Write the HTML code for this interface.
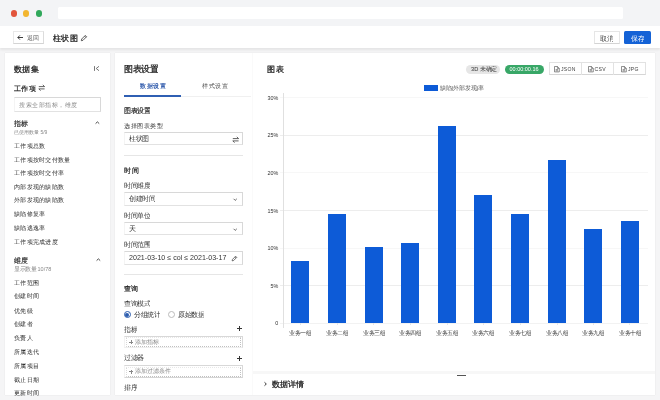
<!DOCTYPE html>
<html><head><meta charset="utf-8">
<style>
*{margin:0;padding:0;box-sizing:border-box}
html,body{width:660px;height:400px;overflow:hidden}
body{background:#f5f5f6;font-family:"Liberation Sans",sans-serif;color:#222;position:relative;-webkit-font-smoothing:antialiased}
.a{position:absolute}
.t{position:absolute;white-space:nowrap;line-height:1;transform:scale(.25);transform-origin:0 0}
.dot{position:absolute;width:6.2px;height:6.2px;border-radius:50%;top:10.4px}
.panel{position:absolute;background:#fff;box-shadow:0 0 1px rgba(0,0,0,.12)}
.box{position:absolute;border:1px solid #d8d8d8;border-bottom-color:#e2e2e2;border-left-color:#f4f4f4;background:#fff}
.grid{position:absolute;left:279.5px;width:368px;height:1px;background:#f1f1f1}
.bar{position:absolute;width:18px;background:#0d5bd7}
svg{position:absolute;overflow:visible}
#w{position:absolute;left:0;top:0;width:660px;height:400px;will-change:transform}
.m{-webkit-text-stroke:1px currentColor}
.n{transform:none}
</style></head><body><div id="w">
<div class="a" style="left:0;top:0;width:660px;height:26px;background:#f3f4f6"></div>
<div class="dot" style="left:10.7px;background:#e2553c"></div>
<div class="dot" style="left:23.1px;background:#f2b630"></div>
<div class="dot" style="left:36.2px;background:#30a85b"></div>
<div class="a" style="left:57.5px;top:7px;width:565px;height:12.4px;background:#fff;border-radius:1.5px"></div>
<div class="a" style="left:0;top:26px;width:660px;height:22px;background:#fff;box-shadow:0 1.5px 2.5px rgba(0,0,0,.07)"></div>
<div class="a" style="left:12.5px;top:30.7px;width:31px;height:13.7px;border:1px solid #e8e8e8;border-bottom-color:#d4d4d4;border-right-color:#dcdcdc;background:#fff"></div>
<svg style="left:17.2px;top:35.2px" width="6" height="5" viewBox="0 0 6 5"><path d="M6 2.5 H0.9 M2.9 0.4 L0.8 2.5 L2.9 4.6" fill="none" stroke="#333" stroke-width=".95"/></svg>
<div class="t" style="left:26.6px;top:34.94px;font-size:25.20px;color:#555;">返回</div>
<div class="t m" style="left:52.9px;top:34.10px;font-size:33.20px;color:#222;-webkit-text-stroke-width:1px;">柱状图</div>
<svg style="left:79.5px;top:34px" width="8" height="8" viewBox="0 0 8 8"><path d="M1.3 6.7 L1.7 5 L5.3 1.4 L6.6 2.7 L3 6.3 Z M4.6 2.1 L5.9 3.4" fill="none" stroke="#444" stroke-width=".85" stroke-linejoin="round"/></svg>
<div class="a" style="left:594.3px;top:31px;width:25.5px;height:13.2px;border:1px solid #e6e6e6;border-bottom-color:#d4d4d4;background:#fff"></div>
<div class="t" style="left:600.4px;top:35.05px;font-size:26.00px;color:#333;">取消</div>
<div class="a" style="left:624.2px;top:31.2px;width:26.5px;height:12.8px;background:#1462d6;border-radius:1.5px"></div>
<div class="t" style="left:630.9px;top:35.00px;font-size:26.40px;color:#fff;">保存</div>
<div class="panel" style="left:4.5px;top:53px;width:105.5px;height:342px"></div>
<div class="t m" style="left:14px;top:65.35px;font-size:32.80px;color:#222;-webkit-text-stroke-width:1px;">数据集</div>
<svg style="left:94px;top:66.1px" width="6" height="5" viewBox="0 0 6 5"><path d="M0.5 0.1 V4.9 M5 0.3 L2.2 2.5 L5 4.7" fill="none" stroke="#555" stroke-width=".8"/></svg>
<div class="t m" style="left:14px;top:84.57px;font-size:29.20px;color:#222;-webkit-text-stroke-width:0.8px;">工作项</div>
<svg style="left:37.6px;top:84.4px" width="7" height="7" viewBox="0 0 7 7"><path d="M0.8 2.6 H6.6 L4.8 0.9 M6.6 4.9 H0.8 L2.6 6.6" fill="none" stroke="#444" stroke-width=".85"/></svg>
<div class="box" style="left:14px;top:97.4px;width:87px;height:14.2px"></div>
<div class="t" style="left:19px;top:101.79px;font-size:25.60px;color:#8a8a8a;">搜索全部指标，维度</div>
<div class="t m" style="left:14px;top:119.80px;font-size:27.20px;color:#222;-webkit-text-stroke-width:0.6px;">指标</div>
<svg style="left:95px;top:121px" width="5" height="3" viewBox="0 0 5 3"><path d="M0.6 2.6 L2.4 0.9 L4.2 2.6" fill="none" stroke="#333" stroke-width=".9"/></svg>
<div class="t" style="left:14px;top:130.05px;font-size:20.00px;color:#888;">已使用数量 5/9</div>
<div class="t" style="left:14px;top:143.04px;font-size:25.20px;color:#2a2a2a;">工作项总数</div>
<div class="t" style="left:14px;top:156.54px;font-size:25.20px;color:#2a2a2a;">工作项按时交付数量</div>
<div class="t" style="left:14px;top:170.04px;font-size:25.20px;color:#2a2a2a;">工作项按时交付率</div>
<div class="t" style="left:14px;top:183.64px;font-size:25.20px;color:#2a2a2a;">内部发现的缺陷数</div>
<div class="t" style="left:14px;top:197.34px;font-size:25.20px;color:#2a2a2a;">外部发现的缺陷数</div>
<div class="t" style="left:14px;top:211.04px;font-size:25.20px;color:#2a2a2a;">缺陷修复率</div>
<div class="t" style="left:14px;top:225.04px;font-size:25.20px;color:#2a2a2a;">缺陷逃逸率</div>
<div class="t" style="left:14px;top:238.79px;font-size:25.20px;color:#2a2a2a;">工作项完成进度</div>
<div class="t m" style="left:14px;top:256.80px;font-size:27.20px;color:#222;-webkit-text-stroke-width:0.6px;">维度</div>
<svg style="left:95.5px;top:258.3px" width="5" height="3" viewBox="0 0 5 3"><path d="M0.6 2.6 L2.4 0.9 L4.2 2.6" fill="none" stroke="#333" stroke-width=".9"/></svg>
<div class="t" style="left:14px;top:266.17px;font-size:22.00px;color:#888;">显示数量 10/78</div>
<div class="t" style="left:14px;top:279.54px;font-size:25.20px;color:#2a2a2a;">工作范围</div>
<div class="t" style="left:14px;top:293.04px;font-size:25.20px;color:#2a2a2a;">创建时间</div>
<div class="t" style="left:14px;top:307.79px;font-size:25.20px;color:#2a2a2a;">优先级</div>
<div class="t" style="left:14px;top:321.04px;font-size:25.20px;color:#2a2a2a;">创建者</div>
<div class="t" style="left:14px;top:335.04px;font-size:25.20px;color:#2a2a2a;">负责人</div>
<div class="t" style="left:14px;top:349.04px;font-size:25.20px;color:#2a2a2a;">所属迭代</div>
<div class="t" style="left:14px;top:362.79px;font-size:25.20px;color:#2a2a2a;">所属项目</div>
<div class="t" style="left:14px;top:376.54px;font-size:25.20px;color:#2a2a2a;">截止日期</div>
<div class="t" style="left:14px;top:390.04px;font-size:25.20px;color:#2a2a2a;">更新时间</div>
<div class="panel" style="left:114.5px;top:53px;width:138px;height:342px"></div>
<div class="t m" style="left:124px;top:65.46px;font-size:34.40px;color:#222;-webkit-text-stroke-width:1px;">图表设置</div>
<div class="t m" style="left:139.8px;top:82.79px;font-size:25.60px;color:#214fa6;-webkit-text-stroke-width:0.6px;">数据设置</div>
<div class="t" style="left:201.8px;top:82.79px;font-size:25.60px;color:#555;">样式设置</div>
<div class="a" style="left:124px;top:96px;width:127px;height:1px;background:#f0f0f0"></div>
<div class="a" style="left:124px;top:95px;width:57px;height:2px;background:#2f5fb3"></div>
<div class="t m" style="left:124px;top:107.30px;font-size:26.40px;color:#222;-webkit-text-stroke-width:0.6px;">图表设置</div>
<div class="t" style="left:124px;top:122.79px;font-size:25.60px;color:#333;">选择图表类型</div>
<div class="box" style="left:124px;top:132px;width:118.5px;height:13.4px"></div>
<div class="t" style="left:128.5px;top:135.25px;font-size:26.00px;color:#333;">柱状图</div>
<svg style="left:231.5px;top:135.8px" width="7" height="7" viewBox="0 0 7 7"><path d="M0.8 2.6 H6.6 L4.8 0.9 M6.6 4.9 H0.8 L2.6 6.6" fill="none" stroke="#444" stroke-width=".85"/></svg>
<div class="a" style="left:124px;top:155px;width:119px;height:1px;background:#e6e6e6"></div>
<div class="t m" style="left:124px;top:167.22px;font-size:29.60px;color:#222;-webkit-text-stroke-width:0.8px;">时间</div>
<div class="t" style="left:124px;top:182.14px;font-size:26.00px;color:#333;">时间维度</div>
<div class="box" style="left:124px;top:192px;width:118.6px;height:13.5px"></div>
<div class="t" style="left:128.8px;top:195.44px;font-size:26.00px;color:#333;">创建时间</div>
<svg style="left:232.6px;top:197.5px" width="5" height="3" viewBox="0 0 5 3"><path d="M0.6 0.8 L2.2 2.4 L3.8 0.8" fill="none" stroke="#444" stroke-width=".8"/></svg>
<div class="t" style="left:124px;top:211.64px;font-size:26.00px;color:#333;">时间单位</div>
<div class="box" style="left:124px;top:222px;width:118.6px;height:13.3px"></div>
<div class="t" style="left:128.8px;top:224.75px;font-size:26.00px;color:#333;">天</div>
<svg style="left:232.6px;top:227.5px" width="5" height="3" viewBox="0 0 5 3"><path d="M0.6 0.8 L2.2 2.4 L3.8 0.8" fill="none" stroke="#444" stroke-width=".8"/></svg>
<div class="t" style="left:124px;top:241.14px;font-size:26.00px;color:#333;">时间范围</div>
<div class="box" style="left:124px;top:251.4px;width:118.6px;height:13.3px"></div>
<div class="t" style="left:128.6px;top:254.46px;font-size:28.40px;color:#333;">2021-03-10 ≤ col ≤ 2021-03-17</div>
<svg style="left:231.3px;top:254.6px" width="7" height="7" viewBox="0 0 8 8"><path d="M1.3 6.7 L1.7 5 L5.3 1.4 L6.6 2.7 L3 6.3 Z M4.6 2.1 L5.9 3.4" fill="none" stroke="#444" stroke-width=".85" stroke-linejoin="round"/></svg>
<div class="a" style="left:124px;top:274px;width:119px;height:1px;background:#e6e6e6"></div>
<div class="t m" style="left:124px;top:285.32px;font-size:28.80px;color:#222;-webkit-text-stroke-width:0.8px;">查询</div>
<div class="t" style="left:124px;top:299.94px;font-size:26.00px;color:#333;">查询模式</div>
<div class="a" style="left:123.65px;top:311.25px;width:7.2px;height:7.2px;border-radius:50%;border:.9px solid #2b5cae;background:#fff"></div>
<div class="a" style="left:125.25px;top:312.85px;width:4px;height:4px;border-radius:50%;background:#2b5cae"></div>
<div class="t" style="left:133.7px;top:311.44px;font-size:26.00px;color:#333;">分组统计</div>
<div class="a" style="left:168.1px;top:311.3px;width:7.2px;height:7.2px;border-radius:50%;border:.8px solid #bbb;background:#fff"></div>
<div class="t" style="left:177.8px;top:311.44px;font-size:26.00px;color:#333;">原始数据</div>
<div class="t" style="left:124px;top:325.55px;font-size:26.00px;color:#333;">指标</div>
<div class="a" style="left:236.5px;top:328.1px;width:5.6px;height:.9px;background:#333"></div><div class="a" style="left:238.85px;top:325.8px;width:.9px;height:5.6px;background:#333"></div>
<div class="a" style="left:124px;top:335.5px;width:118.5px;height:12.6px;border:1px solid #d8d8d8;border-bottom-color:#eee;border-left-color:#f2f2f2"></div>
<div class="a" style="left:126.3px;top:337.2px;width:114.5px;height:9.8px;border:.8px dotted #c0c0c0;border-top-color:#e8e8e8;border-left-color:#d8d8d8"></div>
<div class="a" style="left:129.0px;top:342.1px;width:4.2px;height:.6px;background:#888"></div><div class="a" style="left:130.8px;top:340.3px;width:.6px;height:4.2px;background:#888"></div>
<div class="t" style="left:135.4px;top:339.18px;font-size:24.00px;color:#888;">添加指标</div>
<div class="t" style="left:124px;top:354.44px;font-size:26.00px;color:#333;">过滤器</div>
<div class="a" style="left:236.5px;top:358.1px;width:5.6px;height:.9px;background:#333"></div><div class="a" style="left:238.85px;top:355.8px;width:.9px;height:5.6px;background:#333"></div>
<div class="a" style="left:124px;top:365.2px;width:118.5px;height:13.2px;border:1px solid #d8d8d8;border-bottom-color:#d4d4d4;border-left-color:#f2f2f2"></div>
<div class="a" style="left:126.3px;top:366.9px;width:114.5px;height:9.8px;border:.8px dotted #c0c0c0;border-top-color:#e8e8e8;border-left-color:#d8d8d8"></div>
<div class="a" style="left:129.0px;top:371.4px;width:4.2px;height:.6px;background:#888"></div><div class="a" style="left:130.8px;top:369.6px;width:.6px;height:4.2px;background:#888"></div>
<div class="t" style="left:135.4px;top:368.38px;font-size:24.00px;color:#888;">添加过滤条件</div>
<div class="t" style="left:124px;top:384.14px;font-size:26.00px;color:#333;">排序</div>
<div class="panel" style="left:252.8px;top:53px;width:402.3px;height:342px"></div>
<div class="t m" style="left:266.6px;top:65.15px;font-size:33.60px;color:#222;-webkit-text-stroke-width:1px;">图表</div>
<div class="a" style="left:465.8px;top:64.9px;width:33.8px;height:9px;border-radius:4.5px;background:#e6e6e6"></div>
<div class="t" style="left:470.6px;top:66.42px;font-size:22.80px;color:#333;">3D 未确定</div>
<div class="a" style="left:504.6px;top:64.9px;width:39.4px;height:9.1px;border-radius:4.5px;background:#38a767"></div>
<div class="t n" style="left:509.5px;top:66.92px;font-size:5.50px;color:#fff;">00:00:00.16</div>
<div class="box" style="left:548.6px;top:62.3px;width:97.4px;height:13px;border-color:#e2e2e2;border-bottom-color:#d6d6d6"></div>
<div class="a" style="left:581.2px;top:62.3px;width:1px;height:13px;background:#e2e2e2"></div>
<div class="a" style="left:613.4px;top:62.3px;width:1px;height:13px;background:#e2e2e2"></div>
<svg style="left:553.8px;top:65.8px" width="6" height="7" viewBox="0 0 6 7"><path d="M0.5 0.5 H3.4 L5.3 2.4 V5.9 H0.5 Z M3.4 0.5 V2.4 H5.3 M1.6 3.6 H4.1 M1.6 4.8 H4.1" fill="none" stroke="#555" stroke-width=".65"/></svg>
<div class="t n" style="left:561px;top:67.20px;font-size:5.10px;color:#444;letter-spacing:.3px;">JSON</div>
<svg style="left:588.0px;top:65.8px" width="6" height="7" viewBox="0 0 6 7"><path d="M0.5 0.5 H3.4 L5.3 2.4 V5.9 H0.5 Z M3.4 0.5 V2.4 H5.3 M1.6 3.6 H4.1 M1.6 4.8 H4.1" fill="none" stroke="#555" stroke-width=".65"/></svg>
<div class="t n" style="left:594.5px;top:67.20px;font-size:5.10px;color:#444;letter-spacing:.3px;">CSV</div>
<svg style="left:620.8px;top:65.8px" width="6" height="7" viewBox="0 0 6 7"><path d="M0.5 0.5 H3.4 L5.3 2.4 V5.9 H0.5 Z M3.4 0.5 V2.4 H5.3 M1.6 3.6 H4.1 M1.6 4.8 H4.1" fill="none" stroke="#555" stroke-width=".65"/></svg>
<div class="t n" style="left:627.9px;top:67.20px;font-size:5.10px;color:#444;letter-spacing:.3px;">JPG</div>
<div class="a" style="left:424px;top:85.1px;width:13.6px;height:5.6px;background:#0d5bd7"></div>
<div class="t" style="left:439.8px;top:85.45px;font-size:23.40px;color:#555;">缺陷(外部发现)率</div>
<div class="grid" style="top:97.10px;background:#f7f7f7"></div>
<div class="grid" style="top:134.70px;background:#ededed"></div>
<div class="grid" style="top:172.30px;background:#f7f7f7"></div>
<div class="grid" style="top:209.90px;background:#ededed"></div>
<div class="grid" style="top:247.50px;background:#f7f7f7"></div>
<div class="grid" style="top:285.10px;background:#ededed"></div>
<div class="grid" style="top:322.6px;background:#f2f2f2"></div>
<div class="a" style="left:283px;top:92.7px;width:1px;height:235px;background:#e0e0e0"></div>
<div class="t n" style="left:238.2px;width:40px;text-align:right;top:95.85px;font-size:5.4px;color:#333">30%</div>
<div class="t n" style="left:238.2px;width:40px;text-align:right;top:133.45px;font-size:5.4px;color:#333">25%</div>
<div class="t n" style="left:238.2px;width:40px;text-align:right;top:171.05px;font-size:5.4px;color:#333">20%</div>
<div class="t n" style="left:238.2px;width:40px;text-align:right;top:208.65px;font-size:5.4px;color:#333">15%</div>
<div class="t n" style="left:238.2px;width:40px;text-align:right;top:246.25px;font-size:5.4px;color:#333">10%</div>
<div class="t n" style="left:238.2px;width:40px;text-align:right;top:283.85px;font-size:5.4px;color:#333">5%</div>
<div class="t n" style="left:238.2px;width:40px;text-align:right;top:321.45px;font-size:5.4px;color:#333">0</div>
<div class="bar" style="left:291.2px;top:260.8px;height:62.10px"></div>
<div class="a" style="left:299.90px;top:322.9px;width:.7px;height:2.5px;background:#e6e6e6"></div>
<div class="bar" style="left:328.1px;top:213.9px;height:109.00px"></div>
<div class="a" style="left:336.80px;top:322.9px;width:.7px;height:2.5px;background:#e6e6e6"></div>
<div class="bar" style="left:364.5px;top:247.2px;height:75.70px"></div>
<div class="a" style="left:373.20px;top:322.9px;width:.7px;height:2.5px;background:#e6e6e6"></div>
<div class="bar" style="left:401.2px;top:242.7px;height:80.20px"></div>
<div class="a" style="left:409.90px;top:322.9px;width:.7px;height:2.5px;background:#e6e6e6"></div>
<div class="bar" style="left:438px;top:126.1px;height:196.80px"></div>
<div class="a" style="left:446.70px;top:322.9px;width:.7px;height:2.5px;background:#e6e6e6"></div>
<div class="bar" style="left:474.3px;top:195.2px;height:127.70px"></div>
<div class="a" style="left:483.00px;top:322.9px;width:.7px;height:2.5px;background:#e6e6e6"></div>
<div class="bar" style="left:510.9px;top:214px;height:108.90px"></div>
<div class="a" style="left:519.60px;top:322.9px;width:.7px;height:2.5px;background:#e6e6e6"></div>
<div class="bar" style="left:547.9px;top:160.3px;height:162.60px"></div>
<div class="a" style="left:556.60px;top:322.9px;width:.7px;height:2.5px;background:#e6e6e6"></div>
<div class="bar" style="left:584.3px;top:228.8px;height:94.10px"></div>
<div class="a" style="left:593.00px;top:322.9px;width:.7px;height:2.5px;background:#e6e6e6"></div>
<div class="bar" style="left:620.7px;top:221.2px;height:101.70px"></div>
<div class="a" style="left:629.40px;top:322.9px;width:.7px;height:2.5px;background:#e6e6e6"></div>
<div class="t" style="left:228.20px;width:144px;text-align:center;top:329.90px;font-size:22px;color:#3a3a3a;transform-origin:72px 0">业务一组</div>
<div class="t" style="left:265.10px;width:144px;text-align:center;top:329.90px;font-size:22px;color:#3a3a3a;transform-origin:72px 0">业务二组</div>
<div class="t" style="left:301.50px;width:144px;text-align:center;top:329.90px;font-size:22px;color:#3a3a3a;transform-origin:72px 0">业务三组</div>
<div class="t" style="left:338.20px;width:144px;text-align:center;top:329.90px;font-size:22px;color:#3a3a3a;transform-origin:72px 0">业务四组</div>
<div class="t" style="left:375.00px;width:144px;text-align:center;top:329.90px;font-size:22px;color:#3a3a3a;transform-origin:72px 0">业务五组</div>
<div class="t" style="left:411.30px;width:144px;text-align:center;top:329.90px;font-size:22px;color:#3a3a3a;transform-origin:72px 0">业务六组</div>
<div class="t" style="left:447.90px;width:144px;text-align:center;top:329.90px;font-size:22px;color:#3a3a3a;transform-origin:72px 0">业务七组</div>
<div class="t" style="left:484.90px;width:144px;text-align:center;top:329.90px;font-size:22px;color:#3a3a3a;transform-origin:72px 0">业务八组</div>
<div class="t" style="left:521.30px;width:144px;text-align:center;top:329.90px;font-size:22px;color:#3a3a3a;transform-origin:72px 0">业务九组</div>
<div class="t" style="left:557.70px;width:144px;text-align:center;top:329.90px;font-size:22px;color:#3a3a3a;transform-origin:72px 0">业务十组</div>
<div class="a" style="left:253px;top:371px;width:402px;height:2.5px;background:#f7f7f7"></div>
<div class="a" style="left:457px;top:375px;width:9px;height:1.1px;background:#555"></div>
<svg style="left:264.3px;top:382.2px" width="3" height="4" viewBox="0 0 3 4"><path d="M0.5 0.3 L2.3 2 L0.5 3.7" fill="none" stroke="#222" stroke-width=".9"/></svg>
<div class="t m" style="left:271.8px;top:380.24px;font-size:32.00px;color:#222;-webkit-text-stroke-width:1px;">数据详情</div>
</div></body></html>
